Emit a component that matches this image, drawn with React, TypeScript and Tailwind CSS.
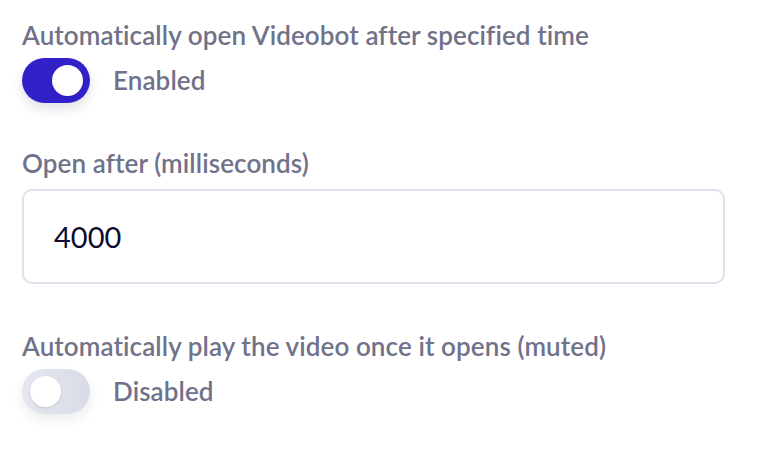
import React from "react";

const Toggle: React.FC<{ on: boolean; label: string }> = ({ on, label }) => {
  return (
    <div className="flex items-center gap-[23px]">
      <div
        className={
          on
            ? "w-[68px] h-[45px] rounded-full bg-[#3220c9] flex items-center justify-end pr-[7px] shadow-[0_6px_12px_rgba(20,20,60,0.12)]"
            : "w-[68px] h-[45px] rounded-full bg-gradient-to-r from-[#e6e8f0] to-[#d8dbe6] flex items-center justify-start pl-[8px] shadow-[0_6px_12px_rgba(20,20,60,0.08)]"
        }
      >
        <div className="w-[31px] h-[31px] rounded-full bg-white shadow-[0_1px_3px_rgba(0,0,0,0.12)]" />
      </div>
      <span className="text-[26px] font-semibold tracking-[0.1px] text-[#70728a]">{label}</span>
    </div>
  );
};

export default function App() {
  return (
    <div
      className="w-[772px] h-[470px] bg-white pl-[22px] pt-[20px]"
      style={{ fontFamily: 'Lato, "Open Sans", sans-serif' }}
    >
      <div className="w-[704px] flex flex-col">
        <p className="text-[26px] font-semibold tracking-[0.1px] text-[#70728a] leading-[30px]">
          Automatically open Videobot after specified time
        </p>
        <div className="mt-[8px]">
          <Toggle on={true} label="Enabled" />
        </div>

        <p className="mt-[45px] text-[26px] font-semibold tracking-[0.1px] text-[#70728a] leading-[30px]">
          Open after (milliseconds)
        </p>
        <div className="mt-[11px] h-[95px] w-[703px] rounded-[10px] border-2 border-[#dfe1ec] flex items-center pl-[30px]">
          <span className="text-[29px] text-[#0d0b2e]">4000</span>
        </div>

        <p className="mt-[47px] text-[26px] font-semibold tracking-[0.1px] text-[#70728a] leading-[30px]">
          Automatically play the video once it opens (muted)
        </p>
        <div className="mt-[8px]">
          <Toggle on={false} label="Disabled" />
        </div>
      </div>
    </div>
  );
}
